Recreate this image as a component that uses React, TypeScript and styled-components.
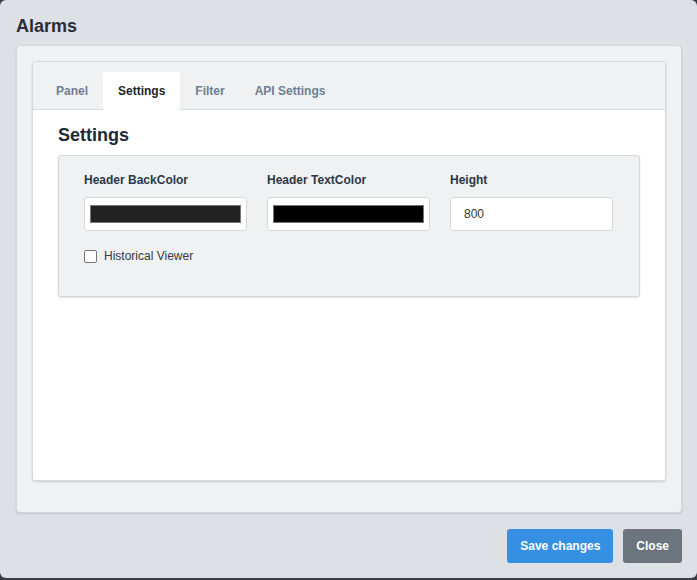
import React from 'react'
import styled, { createGlobalStyle } from 'styled-components'

const GlobalStyle = createGlobalStyle`
  html, body {
    margin: 0;
    padding: 0;
    background: #3a3d42;
    font-family: "Liberation Sans", Arial, sans-serif;
  }
`

const Modal = styled.div`
  width: 697px;
  height: 578px;
  box-sizing: border-box;
  background: #dde0e4;
  border-radius: 6px;
  display: flex;
  flex-direction: column;
  padding: 15px 15px 0 16px;
`

const Title = styled.h1`
  margin: 0;
  font-size: 18px;
  font-weight: bold;
  color: #2b2f35;
  line-height: 22px;
`

const Body = styled.div`
  margin-top: 8px;
  height: 468px;
  box-sizing: border-box;
  background: #f0f1f3;
  border: 1px solid #d3d6da;
  border-radius: 4px;
  box-shadow: 0 1px 2px rgba(0, 0, 0, 0.12);
  padding: 15px 15px 31px 15px;
  display: flex;
`

const Card = styled.div`
  flex: 1;
  display: flex;
  flex-direction: column;
  background: #ffffff;
  border: 1px solid #d6d9dd;
  border-radius: 3px;
  box-shadow: 0 1px 2px rgba(0, 0, 0, 0.15);
  overflow: hidden;
`

const TabBar = styled.div`
  display: flex;
  align-items: flex-end;
  height: 48px;
  box-sizing: border-box;
  padding: 10px 0 0 8px;
  background: #f0f1f3;
  border-bottom: 1px solid #d6d9dd;
`

const Tab = styled.div<{ $active?: boolean }>`
  height: 38px;
  box-sizing: border-box;
  padding: 0 15px;
  display: flex;
  align-items: center;
  font-size: 12px;
  font-weight: bold;
  color: ${(p) => (p.$active ? '#222629' : '#6d7f92')};
  background: ${(p) => (p.$active ? '#ffffff' : 'transparent')};
  border-radius: 3px 3px 0 0;
  margin-bottom: -1px;
`

const Content = styled.div`
  padding: 14px 25px 0 25px;
`

const Heading = styled.h2`
  margin: 0;
  font-size: 18px;
  font-weight: bold;
  color: #1f2937;
  line-height: 22px;
`

const Panel = styled.div`
  margin-top: 9px;
  height: 142px;
  box-sizing: border-box;
  background: #f0f1f3;
  border: 1px solid #d3d6da;
  border-radius: 3px;
  box-shadow: 0 1px 2px rgba(0, 0, 0, 0.12);
  padding: 16px 25px 0 25px;
`

const FieldRow = styled.div`
  display: grid;
  grid-template-columns: repeat(3, 163px);
  column-gap: 20px;
`

const Field = styled.div`
  display: flex;
  flex-direction: column;
`

const Label = styled.label`
  font-size: 12px;
  font-weight: bold;
  color: #2d3748;
  line-height: 16px;
  margin-bottom: 9px;
`

const InputBox = styled.div`
  height: 34px;
  box-sizing: border-box;
  background: #ffffff;
  border: 1px solid #d5d8dc;
  border-radius: 3px;
  display: flex;
  align-items: center;
  padding: 0 5px;
  font-size: 12px;
  color: #333;
`

const Swatch = styled.div<{ $color: string }>`
  flex: 1;
  height: 18px;
  box-sizing: border-box;
  background: ${(p) => p.$color};
  border: 1px solid #767676;
`

const TextValue = styled.span`
  padding-left: 8px;
`

const CheckRow = styled.label`
  display: flex;
  align-items: center;
  gap: 7px;
  margin-top: 18px;
  font-size: 12px;
  color: #333840;
`

const Box = styled.span`
  width: 13px;
  height: 13px;
  box-sizing: border-box;
  border: 1px solid #767676;
  border-radius: 2px;
  background: #fff;
`

const Footer = styled.div`
  display: flex;
  justify-content: flex-end;
  gap: 10px;
  margin-top: 16px;
`

const Button = styled.button<{ $variant: 'primary' | 'secondary' }>`
  height: 34px;
  border: none;
  border-radius: 3px;
  padding: 0 13px;
  font-family: inherit;
  font-size: 12px;
  font-weight: bold;
  color: #ffffff;
  background: ${(p) => (p.$variant === 'primary' ? '#3590e3' : '#6c757d')};
`

const tabs = ['Panel', 'Settings', 'Filter', 'API Settings']

export default function App() {
  return (
    <>
      <GlobalStyle />
      <Modal>
        <Title>Alarms</Title>
        <Body>
          <Card>
            <TabBar>
              {tabs.map((t) => (
                <Tab key={t} $active={t === 'Settings'}>
                  {t}
                </Tab>
              ))}
            </TabBar>
            <Content>
              <Heading>Settings</Heading>
              <Panel>
                <FieldRow>
                  <Field>
                    <Label>Header BackColor</Label>
                    <InputBox>
                      <Swatch $color="#222222" />
                    </InputBox>
                  </Field>
                  <Field>
                    <Label>Header TextColor</Label>
                    <InputBox>
                      <Swatch $color="#000000" />
                    </InputBox>
                  </Field>
                  <Field>
                    <Label>Height</Label>
                    <InputBox>
                      <TextValue>800</TextValue>
                    </InputBox>
                  </Field>
                </FieldRow>
                <CheckRow>
                  <Box />
                  Historical Viewer
                </CheckRow>
              </Panel>
            </Content>
          </Card>
        </Body>
        <Footer>
          <Button $variant="primary">Save changes</Button>
          <Button $variant="secondary">Close</Button>
        </Footer>
      </Modal>
    </>
  )
}
